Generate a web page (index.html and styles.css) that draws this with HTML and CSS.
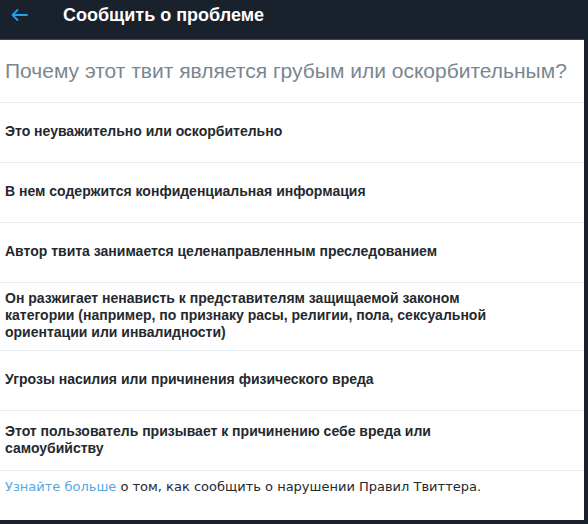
FILE: index.html
```html
<!DOCTYPE html>
<html lang="ru">
<head>
<meta charset="utf-8">
<title>Сообщить о проблеме</title>
<link rel="stylesheet" href="styles.css">
</head>
<body>
<div class="frame">
  <header class="topbar">
    <button class="back" aria-label="Назад">
      <svg width="17" height="12" viewBox="0 0 17 12"><path d="M6.5 1 L1.5 6 L6.5 11 M1.5 6 H16" fill="none" stroke="#1da1f2" stroke-width="1.8" stroke-linecap="round" stroke-linejoin="round"/></svg>
    </button>
    <h1 class="title">Сообщить о проблеме</h1>
  </header>
  <main class="panel">
    <h2 class="question">Почему этот твит является грубым или оскорбительным?</h2>
    <ul class="options">
      <li class="option"><span class="label">Это неуважительно или оскорбительно</span></li>
      <li class="option"><span class="label">В нем содержится конфиденциальная информация</span></li>
      <li class="option"><span class="label">Автор твита занимается целенаправленным преследованием</span></li>
      <li class="option"><span class="label">Он разжигает ненависть к представителям защищаемой законом категории (например, по признаку расы, религии, пола, сексуальной ориентации или инвалидности)</span></li>
      <li class="option"><span class="label">Угрозы насилия или причинения физического вреда</span></li>
      <li class="option"><span class="label">Этот пользователь призывает к причинению себе вреда или самоубийству</span></li>
    </ul>
    <p class="footer"><a class="link" href="#">Узнайте больше</a> о том, как сообщить о нарушении Правил Твиттера.</p>
  </main>
</div>
</body>
</html>
```
FILE: styles.css
```css
html, body {
  margin: 0;
  padding: 0;
  background: #18212c;
  height: 100%;
}
.frame {
  width: 584px;
  height: 520px;
  display: flex;
  flex-direction: column;
}
.topbar {
  height: 40px;
  flex: none;
  display: flex;
  align-items: center;
  background: #18212c;
  border-bottom: 1px solid #3a4654;
  box-sizing: border-box;
  padding-bottom: 9px;
}
.back {
  background: none;
  border: 0;
  padding: 0;
  margin: 0 0 0 11px;
  width: 17px;
  height: 12px;
  display: flex;
}
.title {
  margin: 0 0 0 35px;
  font-family: "Liberation Sans", Arial, sans-serif;
  font-weight: bold;
  font-size: 18px;
  color: #ffffff;
}
.panel {
  flex: 1;
  background: #ffffff;
  display: flex;
  flex-direction: column;
}
.question {
  margin: 0;
  height: 63px;
  box-sizing: border-box;
  padding: 18px 0 0 5px;
  font-family: "Liberation Sans", Arial, sans-serif;
  font-weight: normal;
  font-size: 21px;
  line-height: 25px;
  color: #7a8691;
  border-bottom: 1px solid #e6ecf0;
}
.options {
  list-style: none;
  margin: 0;
  padding: 0;
}
.option {
  min-height: 60px;
  box-sizing: border-box;
  padding: 7px 5px 9px;
  display: flex;
  align-items: center;
  border-bottom: 1px solid #e6ecf0;
  font-family: "Liberation Sans", Arial, sans-serif;
  font-weight: bold;
  font-size: 14px;
  line-height: 17px;
  color: #24292e;
}
.label {
  max-width: 500px;
}
.footer {
  margin: 0;
  padding: 8px 5px 0;
  font-family: "DejaVu Sans", sans-serif;
  font-size: 13px;
  line-height: 16px;
  color: #24292e;
}
.link {
  color: #5aa7df;
  text-decoration: none;
}
```
